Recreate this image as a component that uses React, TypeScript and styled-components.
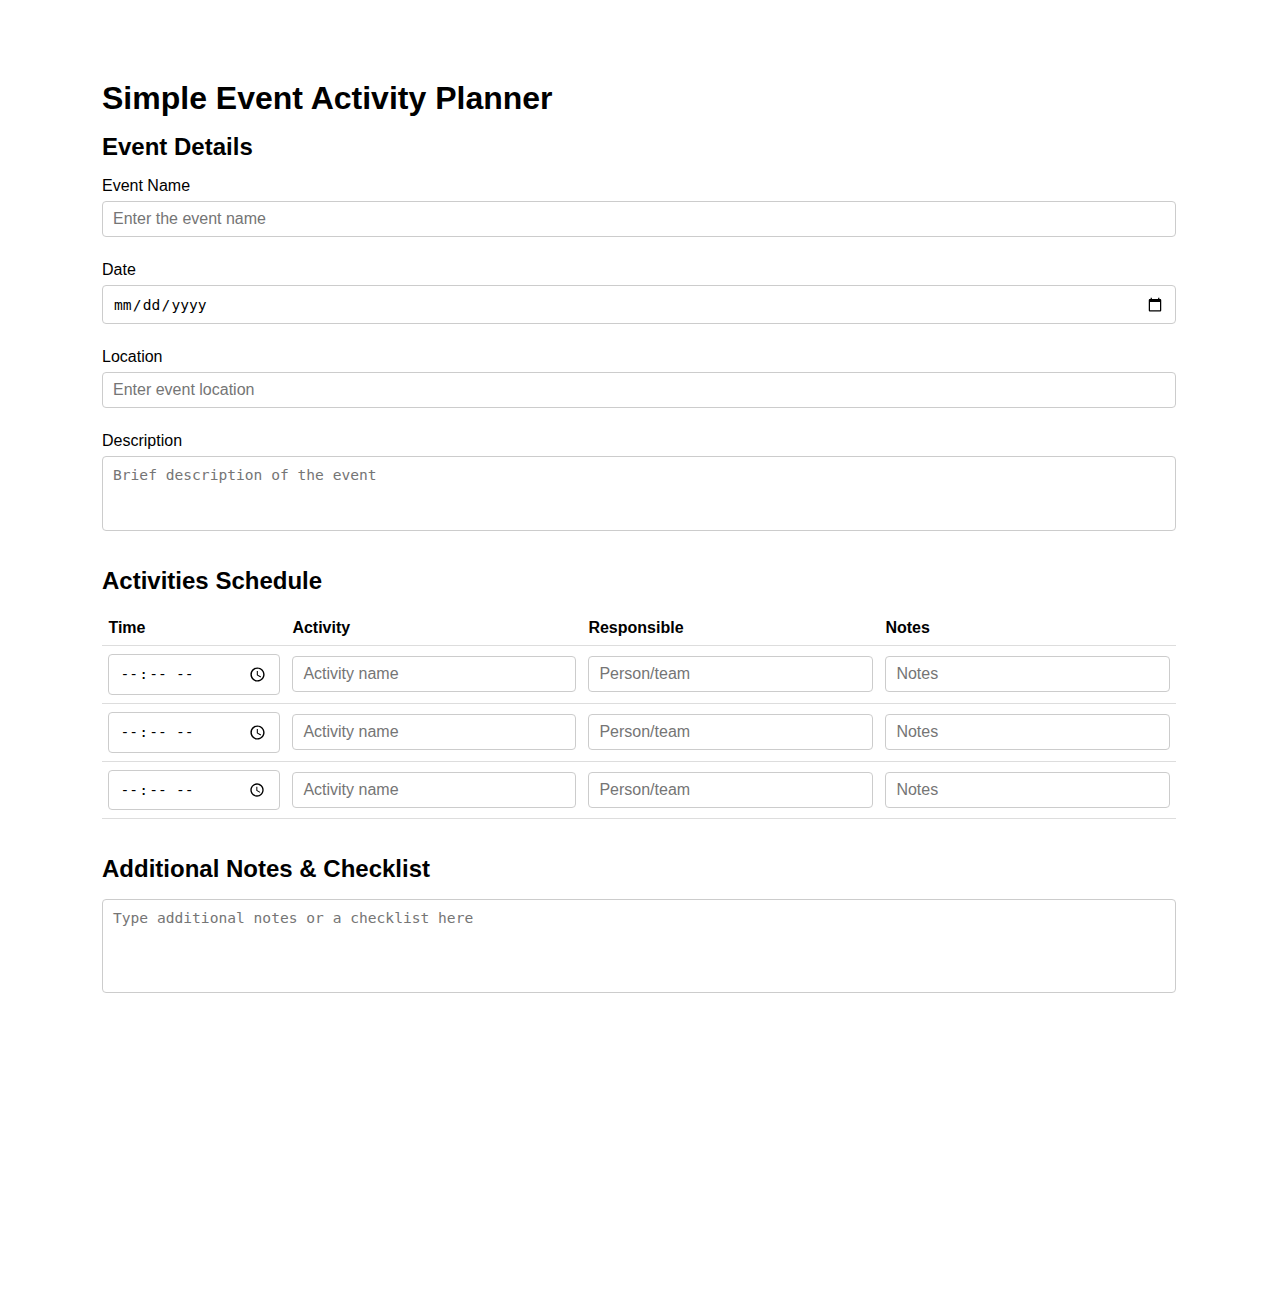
import styled, { createGlobalStyle } from "styled-components";

const GlobalStyle = createGlobalStyle`
  html, body {
    margin: 0;
    padding: 0;
    background: #fff;
  }
  body {
    font-family: "Liberation Sans", Arial, sans-serif;
    color: #000;
  }
`;

const Page = styled.main`
  box-sizing: border-box;
  width: 1278px;
  min-height: 1300px;
  padding: 80px 102px 0;
`;

const Title = styled.h1`
  margin: 0 0 16px;
  font-size: 32px;
  line-height: 37px;
  font-weight: 700;
`;

const SectionTitle = styled.h2<{ $spaced?: boolean }>`
  margin: ${(p) => (p.$spaced ? "36px" : "0")} 0 16px;
  font-size: 24px;
  line-height: 28px;
  font-weight: 700;
`;

const Field = styled.div`
  margin-bottom: 24px;
`;

const Label = styled.label`
  display: block;
  margin-bottom: 6px;
  font-size: 16px;
  line-height: 18px;
`;

const TextInput = styled.input`
  display: block;
  box-sizing: border-box;
  width: 100%;
  padding: 8px 10px;
  border: 1px solid #ccc;
  border-radius: 4px;
  background: #fff;
  font-family: "Liberation Sans", Arial, sans-serif;
  font-size: 16px;
  line-height: 18px;
  height: 36px;
  color: #000;

  &::placeholder {
    color: #757575;
  }
`;

// closest installed match for the monospace used by date, time and textarea
const PickerInput = styled(TextInput)`
  height: 39px;
  font-family: "DejaVu Sans Mono", monospace;
  font-size: 14.6px;

  &::-webkit-datetime-edit-text {
    padding: 0 0.2px;
  }

  &::-webkit-calendar-picker-indicator {
    font-size: 16px;
  }
`;

const TimeInput = styled(PickerInput)`
  height: 40.8px;

  &::-webkit-datetime-edit-ampm-field {
    margin-left: -2px;
  }
`;

const TextArea = styled.textarea<{ $height: number }>`
  display: block;
  box-sizing: border-box;
  width: 100%;
  height: ${(p) => p.$height}px;
  padding: 10px;
  border: 1px solid #ccc;
  border-radius: 4px;
  font-family: "DejaVu Sans Mono", monospace;
  font-size: 14.6px;
  line-height: 15px;
  resize: none;

  &::placeholder {
    color: #757575;
  }
`;

const Schedule = styled.table`
  width: 100%;
  table-layout: fixed;
  border-collapse: collapse;
`;

const HeadCell = styled.th<{ $width: number }>`
  width: ${(p) => p.$width}px;
  box-sizing: border-box;
  padding: 8px 6.4px;
  border-bottom: 1px solid #ddd;
  text-align: left;
  font-size: 16px;
  line-height: 18px;
  font-weight: 700;
`;

const Cell = styled.td`
  padding: 8px 6.4px;
  border-bottom: 1px solid #ddd;
  vertical-align: middle;
`;

const rows = [0, 1, 2];

export default function App() {
  return (
    <Page>
      <GlobalStyle />
      <Title>Simple Event Activity Planner</Title>

      <SectionTitle>Event Details</SectionTitle>
      <Field>
        <Label htmlFor="event-name">Event Name</Label>
        <TextInput id="event-name" type="text" placeholder="Enter the event name" />
      </Field>
      <Field>
        <Label htmlFor="event-date">Date</Label>
        <PickerInput id="event-date" type="date" />
      </Field>
      <Field>
        <Label htmlFor="event-location">Location</Label>
        <TextInput id="event-location" type="text" placeholder="Enter event location" />
      </Field>
      <Field>
        <Label htmlFor="event-description">Description</Label>
        <TextArea id="event-description" $height={75} placeholder="Brief description of the event" />
      </Field>

      <SectionTitle $spaced>Activities Schedule</SectionTitle>
      <Schedule>
        <thead>
          <tr>
            <HeadCell $width={184}>Time</HeadCell>
            <HeadCell $width={296}>Activity</HeadCell>
            <HeadCell $width={297}>Responsible</HeadCell>
            <HeadCell $width={297}>Notes</HeadCell>
          </tr>
        </thead>
        <tbody>
          {rows.map((row) => (
            <tr key={row}>
              <Cell>
                <TimeInput type="time" aria-label="Time" />
              </Cell>
              <Cell>
                <TextInput type="text" placeholder="Activity name" />
              </Cell>
              <Cell>
                <TextInput type="text" placeholder="Person/team" />
              </Cell>
              <Cell>
                <TextInput type="text" placeholder="Notes" />
              </Cell>
            </tr>
          ))}
        </tbody>
      </Schedule>

      <SectionTitle $spaced>Additional Notes &amp; Checklist</SectionTitle>
      <TextArea $height={94} placeholder="Type additional notes or a checklist here" />
    </Page>
  );
}
